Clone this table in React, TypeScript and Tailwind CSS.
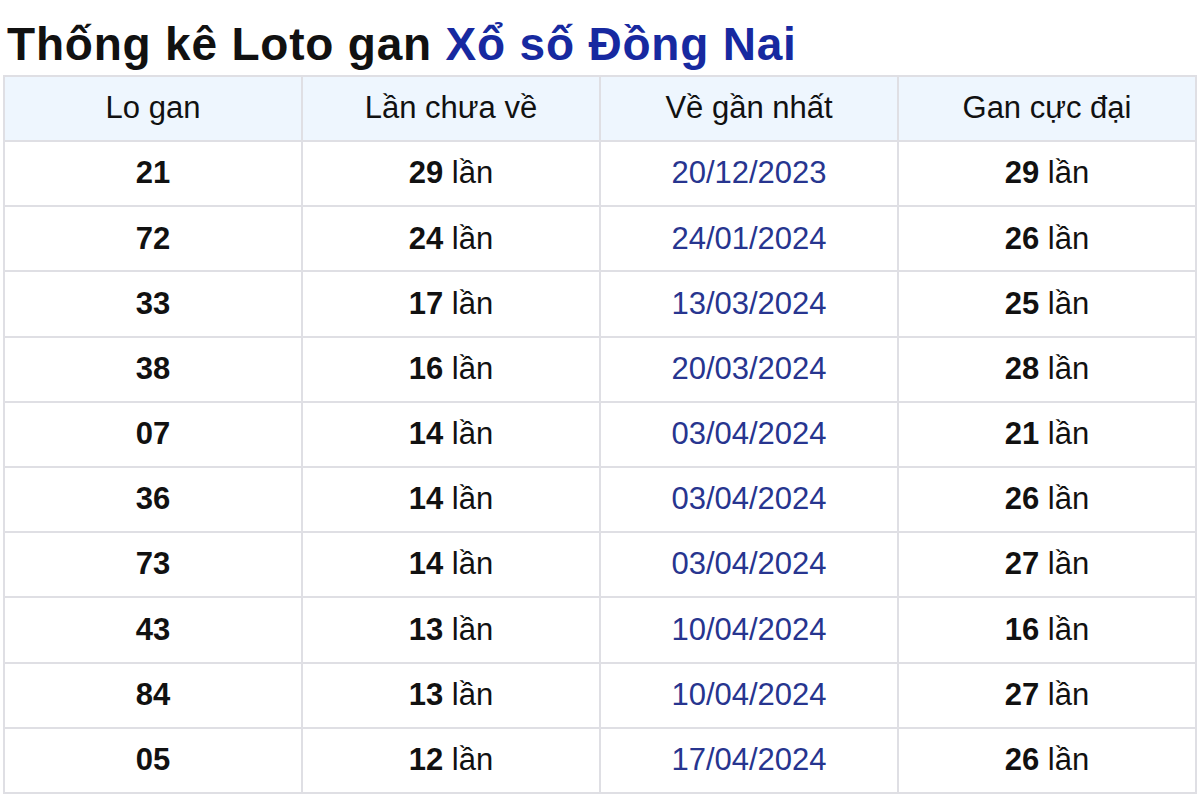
const ROWS = [
  { so: "21", lan: 29, ngay: "20/12/2023", max: 29 },
  { so: "72", lan: 24, ngay: "24/01/2024", max: 26 },
  { so: "33", lan: 17, ngay: "13/03/2024", max: 25 },
  { so: "38", lan: 16, ngay: "20/03/2024", max: 28 },
  { so: "07", lan: 14, ngay: "03/04/2024", max: 21 },
  { so: "36", lan: 14, ngay: "03/04/2024", max: 26 },
  { so: "73", lan: 14, ngay: "03/04/2024", max: 27 },
  { so: "43", lan: 13, ngay: "10/04/2024", max: 16 },
  { so: "84", lan: 13, ngay: "10/04/2024", max: 27 },
  { so: "05", lan: 12, ngay: "17/04/2024", max: 26 },
];

const HEADERS = ["Lo gan", "Lần chưa về", "Về gần nhất", "Gan cực đại"];

const cell = "border-2 border-[#dfdfe4] text-center align-middle p-0";

const Times = ({ n }: { n: number }) => (
  <>
    <b className="font-bold">{n}</b> lần
  </>
);

export default function App() {
  return (
    <div className="h-[795px] w-[1200px] overflow-hidden bg-white font-['Liberation_Sans',Arial,sans-serif] text-[#111]">
      <h2 className="h-[75px] pl-[7px] pt-[21px] text-[46px] font-bold leading-[46px] tracking-[0.8px]">
        Thống kê Loto gan <span className="text-[#1729a0]">Xổ số Đồng Nai</span>
      </h2>
      <table className="ml-[3px] w-[1194px] table-fixed border-collapse text-[31px]">
        <thead>
          <tr className="h-[65px] bg-[#eef6fe]">
            {HEADERS.map((h) => (
              <th key={h} className={cn(cell, "font-normal")}>
                {h}
              </th>
            ))}
          </tr>
        </thead>
        <tbody>
          {ROWS.map((r) => (
            <tr key={r.so} className="h-[65.2px]">
              <td className={cn(cell, "font-bold")}>{r.so}</td>
              <td className={cell}>
                <Times n={r.lan} />
              </td>
              <td className={cn(cell, "text-[#27358f]")}>{r.ngay}</td>
              <td className={cell}>
                <Times n={r.max} />
              </td>
            </tr>
          ))}
        </tbody>
      </table>
    </div>
  );
}

function cn(...c: string[]) {
  return c.join(" ");
}
